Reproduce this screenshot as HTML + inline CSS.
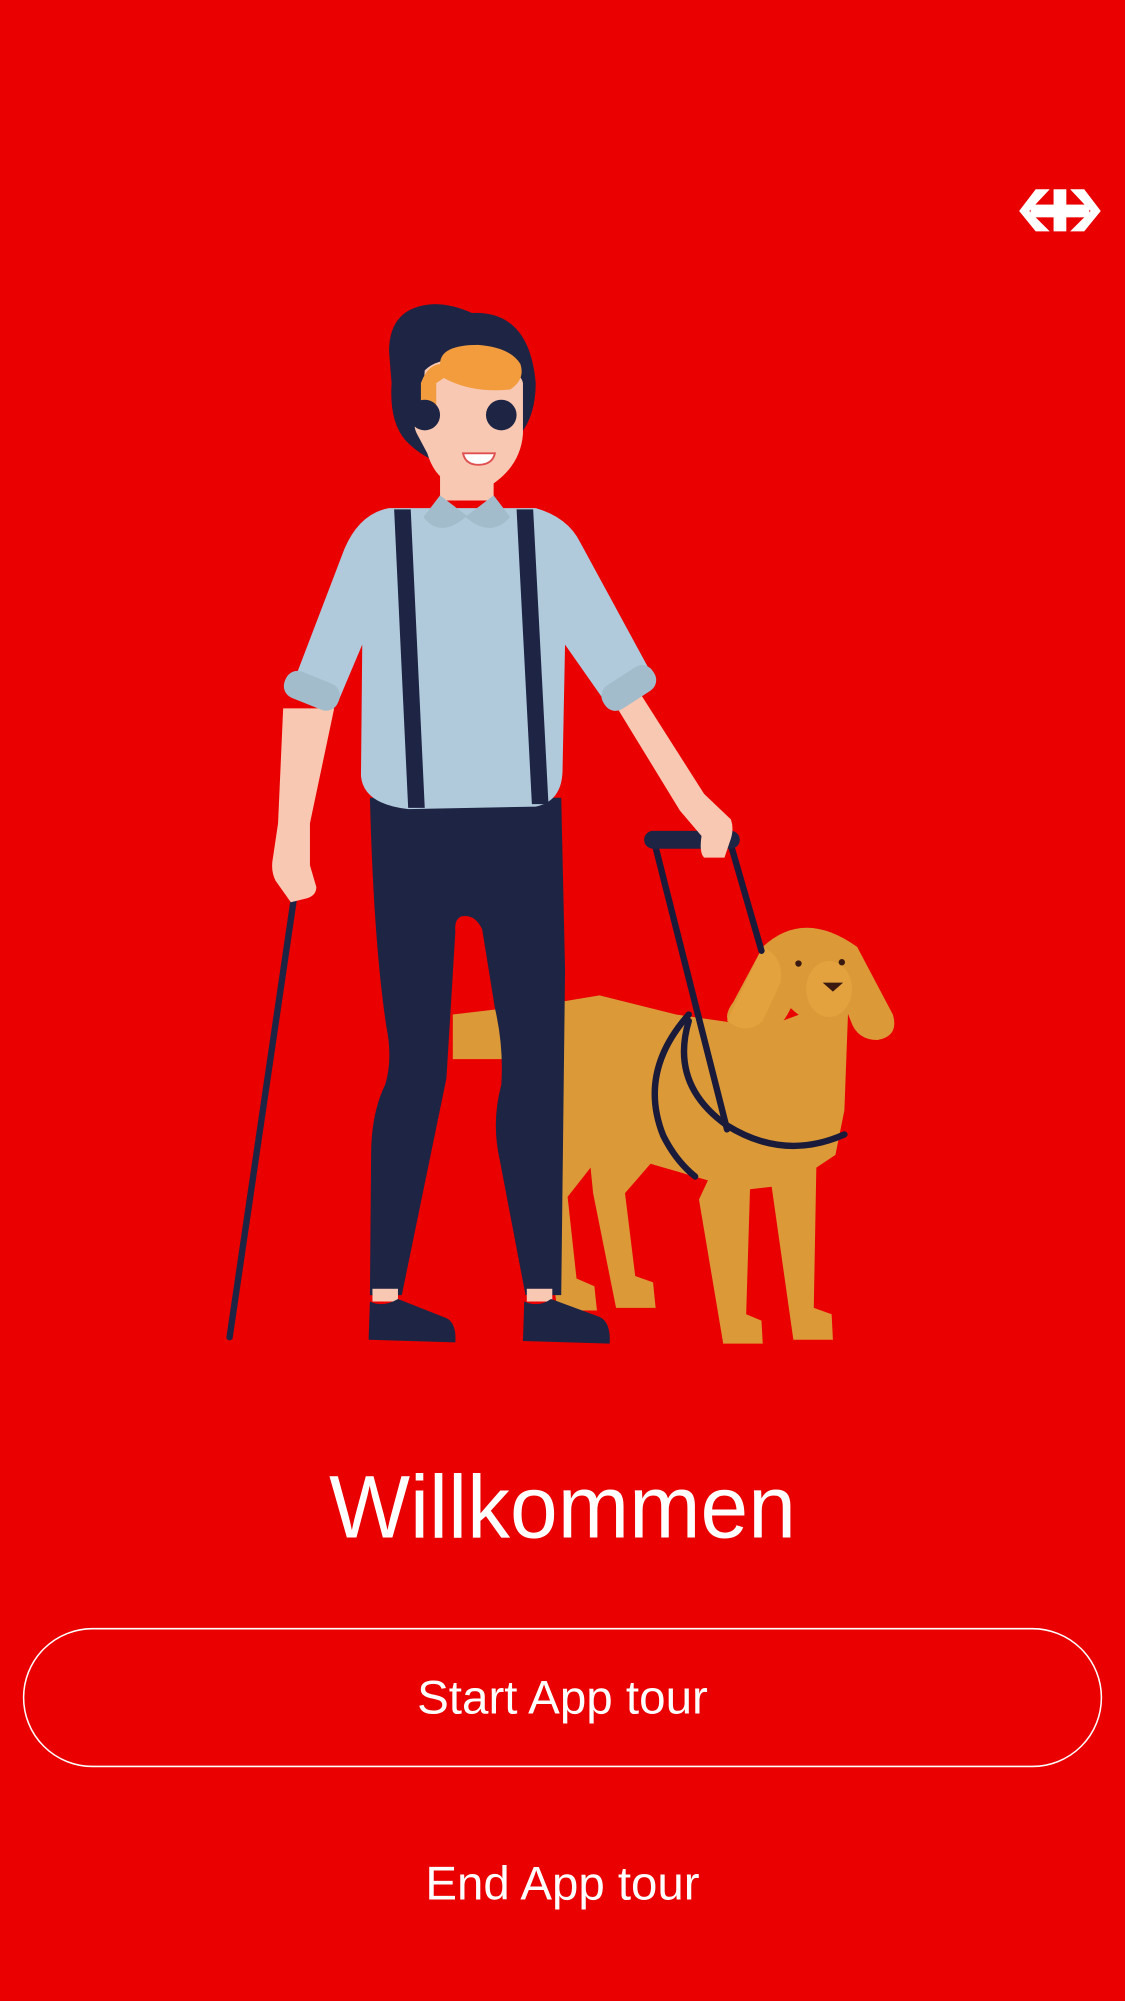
<!DOCTYPE html>
<html><head><meta charset="utf-8"><style>
html,body{margin:0;padding:0;background:#eb0000;}
svg{display:block}
</style></head><body>
<svg width="1125" height="2001" viewBox="0 0 882 1568" xmlns="http://www.w3.org/2000/svg">
<rect width="882" height="1568" fill="#eb0000"/>
<!-- SBB logo -->
<g fill="#fff">
<rect x="808" y="160" width="46" height="10"/>
<rect x="826" y="148" width="10" height="33"/>
<polygon points="812,148 823,148 807,165 823,181 812,181 799,165"/>
<polygon points="850,148 839,148 855,165 839,181 850,181 863,165"/>
</g>
<!-- cane -->
<line x1="231" y1="700" x2="180" y2="1048" stroke="#1e2444" stroke-width="5" stroke-linecap="round"/>
<!-- dog tail/back body -->
<path d="M355 795 L440 785 L470 780 L530 795 L600 805 L640 790 L665 790 L662 870 L655 905 L640 915 L638 1025 L652 1030 L653 1050 L622 1050 L605 930 L588 932 L585 1030 L597 1035 L598 1053 L567 1053 L548 940 L555 925 L510 912 L490 935 L498 1000 L512 1005 L514 1025 L483 1025 L465 935 L463 915 L445 938 L452 1002 L466 1008 L468 1027 L437 1027 L420 900 L400 830 L355 830 Z" fill="#db9937"/>
<!-- dog head -->
<path d="M598 742 Q630 712 672 742 L700 795 Q705 812 688 815 Q672 815 667 800 L663 790 Q640 810 620 790 Q606 818 590 810 Q560 805 575 785 Z" fill="#db9937"/>
<path d="M598 742 Q615 750 612 770 L598 800 Q585 812 570 800 Z" fill="#e3a23e"/>
<ellipse cx="650" cy="775" rx="18" ry="22" fill="#e3a23e"/>
<circle cx="626" cy="755" r="2.5" fill="#3a1a10"/>
<circle cx="660" cy="754" r="2.5" fill="#3a1a10"/>
<path d="M645 770 L661 770 L653 777 Z" fill="#3a1a10"/>
<!-- harness -->
<g fill="none" stroke="#1a1a3a" stroke-width="5" stroke-linecap="round">
<path d="M513 660 L570 885"/>
<path d="M573 662 L597 745"/>
<path d="M540 795 Q500 840 520 890 Q530 910 545 922"/>
<path d="M540 800 Q525 850 570 882 Q615 910 662 889"/>
</g>
<rect x="505" y="651" width="75" height="14" rx="7" fill="#1e2444"/>
<!-- pants -->
<path d="M290 625 L440 625 L443 760 L440 1015 L412 1015 L392 910 Q385 880 393 850 Q395 820 388 790 L378 728 Q372 716 362 718 Q356 720 357 730 L350 845 L315 1015 L290 1015 L291 900 Q292 870 302 850 Q308 830 303 805 Q293 740 290 625 Z" fill="#1e2444"/>
<!-- feet skin + shoes -->
<rect x="292" y="1010" width="20" height="10" fill="#f8c8b2"/>
<rect x="413" y="1010" width="20" height="10" fill="#f8c8b2"/>
<path d="M290 1020 Q300 1025 312 1018 L350 1033 Q358 1037 357 1052 L289 1050 Z" fill="#1e2444"/>
<path d="M411 1020 Q422 1025 432 1018 L470 1032 Q479 1036 478 1053 L410 1051 Z" fill="#1e2444"/>
<!-- arms skin -->
<path d="M222 555 L262 555 L243 645 L243 678 L248 695 Q248 702 240 704 L228 707 L216 690 Q212 682 214 672 L218 645 Z" fill="#f8c8b2"/>
<path d="M478 545 L503 545 L552 622 L573 642 Q576 650 572 660 L568 672 L552 672 Q548 668 550 655 L533 635 Z" fill="#f8c8b2"/>
<!-- shirt -->
<path d="M305 398 L420 398 Q445 405 455 425 L512 530 L478 555 L443 505 L441 605 Q440 628 420 632 L320 634 Q285 630 283 608 L284 505 L265 550 L228 540 L270 430 Q282 402 305 398 Z" fill="#b0cadb"/>
<rect x="222" y="530" width="45" height="22" rx="10" fill="#a2bccb" transform="rotate(22 244 541)"/>
<rect x="470" y="528" width="46" height="22" rx="10" fill="#a2bccb" transform="rotate(-33 493 539)"/>
<!-- neck -->
<rect x="345" y="360" width="42" height="32" fill="#f8c8b2"/>
<path d="M345 388 L332 405 Q345 422 365 405 Q385 422 400 405 L387 388 L366 404 Z" fill="#a2bccb"/>
<!-- suspenders -->
<polygon points="309,399 322,399 333,633 320,633" fill="#1e2444"/>
<polygon points="405,399 418,399 430,630 417,630" fill="#1e2444"/>
<!-- head -->
<path d="M305 275 Q305 240 340 238 Q355 238 370 245 Q415 243 420 300 Q420 325 408 340 L380 370 Q340 368 318 345 Q305 330 307 300 Z" fill="#1e2444"/>
<path d="M333 290 Q345 278 375 282 Q408 288 410 300 L410 340 Q408 365 385 380 Q370 385 352 378 Q340 372 335 355 L327 340 Q322 330 330 328 Z" fill="#f8c8b2"/>
<path d="M330 300 Q335 286 345 285 Q345 270 375 270 Q400 272 408 285 Q412 297 400 305 Q370 308 348 296 L342 300 L342 330 L330 330 Z" fill="#f29c3e"/>
<circle cx="333" cy="325" r="12" fill="#1e2444"/>
<circle cx="393" cy="325" r="12" fill="#1e2444"/>
<path d="M363 355 L388 355 Q386 364 375 364 Q365 364 363 355 Z" fill="#fff" stroke="#e05050" stroke-width="1.5"/>
<!-- text -->
<text x="441" y="1205" text-anchor="middle" font-family="Liberation Sans, sans-serif" font-size="70" fill="#fff" textLength="366" lengthAdjust="spacingAndGlyphs">Willkommen</text>
<rect x="18.5" y="1276.5" width="845" height="108" rx="54" fill="none" stroke="#fff" stroke-width="1.2"/>
<text x="441" y="1343" text-anchor="middle" font-family="Liberation Sans, sans-serif" font-size="37" fill="#fff" textLength="228" lengthAdjust="spacingAndGlyphs">Start App tour</text>
<text x="441" y="1489" text-anchor="middle" font-family="Liberation Sans, sans-serif" font-size="37" fill="#fff" textLength="215" lengthAdjust="spacingAndGlyphs">End App tour</text>
</svg>
</body></html>
